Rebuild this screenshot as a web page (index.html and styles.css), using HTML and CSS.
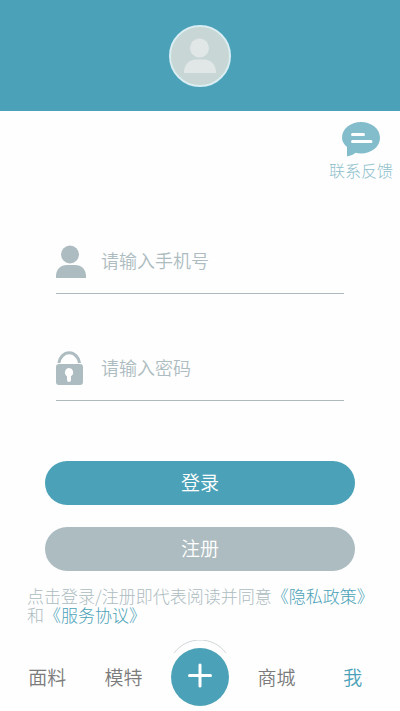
FILE: index.html
```html
<!DOCTYPE html>
<html lang="zh-CN">
<head>
<meta charset="utf-8">
<meta name="viewport" content="width=device-width, initial-scale=1">
<title>登录</title>
<link rel="stylesheet" href="styles.css">
</head>
<body>
<header class="header">
  <svg class="avatar" viewBox="0 0 62 62" role="img" aria-label="头像">
    <circle class="avatar-disc" cx="31" cy="31" r="30"/>
    <circle class="avatar-person" cx="30.500" cy="23" r="9.500"/>
    <path class="avatar-person" d="M15 48v-1c0-7 5-12.500 12-12.500h8c7 0 12 5.500 12 12.500v1z"/>
  </svg>
</header>
<main class="main">
  <a class="feedback" href="#feedback">
    <svg class="feedback-icon" viewBox="0 0 38 36" aria-hidden="true">
      <path class="bubble" d="M19 0C29.500 0 38 6.800 38 15.800S29.500 31.500 19 31.500c-2 0-3.800-.2-5.500-.7-2 1.800-4.500 3-8.500 3.700V25C2 22.500 0 19.500 0 15.800 0 6.800 8.500 0 19 0z"/>
      <path class="bubble-line" d="M10.500 12.500h11M10.500 19.500h18.500"/>
    </svg>
    <span>联系反馈</span>
  </a>
  <form class="form">
    <div class="fields">
      <div class="field">
        <label class="field-label" for="phone" aria-label="手机号">
          <svg class="field-icon" viewBox="0 0 30 34" aria-hidden="true">
            <circle cx="14" cy="10.500" r="9"/>
            <path d="M0 34v-2c0-6.500 4.500-11 11-11h8c6.500 0 11 4.500 11 11v2z"/>
          </svg>
        </label>
        <input class="field-input" id="phone" type="tel" placeholder="请输入手机号">
      </div>
      <div class="field">
        <label class="field-label" for="password" aria-label="密码">
          <svg class="field-icon" viewBox="0 0 30 34" aria-hidden="true">
            <path class="shackle" d="M2.800 12a10.600 12.800 0 0 1 20.800 0"/>
            <path fill-rule="evenodd" d="M3 13h21a3 3 0 0 1 3 3v15a3 3 0 0 1-3 3H3a3 3 0 0 1-3-3V16a3 3 0 0 1 3-3zM13.300 17a4.500 4.500 0 0 0-2.300 8.300V29a2 2 0 0 0 4 0v-3.700A4.500 4.500 0 0 0 13.300 17z"/>
          </svg>
        </label>
        <input class="field-input" id="password" type="password" placeholder="请输入密码">
      </div>
    </div>
    <div class="actions">
      <button class="btn btn-primary" type="submit">登录</button>
      <button class="btn btn-muted" type="button">注册</button>
    </div>
  </form>
  <p class="terms">点击登录/注册即代表阅读并同意<a href="#privacy">《隐私政策》</a>和<a href="#service">《服务协议》</a></p>
</main>
<nav class="tabs">
  <a class="tab" href="#fabric">面料</a>
  <a class="tab" href="#model">模特</a>
  <button class="add" type="button" aria-label="添加">
    <svg class="add-icon" viewBox="0 0 66 66" aria-hidden="true">
      <path class="add-arc" d="M7 13a32.500 32.500 0 0 1 52 0"/>
      <circle class="add-disc" cx="33" cy="37" r="29"/>
      <path class="add-plus" d="M33 25v21M22.500 35.500h21"/>
    </svg>
  </button>
  <a class="tab" href="#mall">商城</a>
  <a class="tab tab-active" href="#me">我</a>
</nav>
</body>
</html>
```
FILE: styles.css
```css
* {
  box-sizing: border-box;
}

body {
  margin: 0;
  min-height: 100vh;
  display: flex;
  flex-direction: column;
  background: #fefefe;
  color: #adbcc0;
  font-family: "Noto Sans CJK SC", sans-serif;
  font-weight: 300;
}

a {
  color: #4ba2b8;
  text-decoration: none;
}

button,
input {
  font: inherit;
  border: 0;
  padding: 0;
}

.header {
  display: flex;
  justify-content: center;
  padding: 25px 0 24px;
  background: #4ba2b8;
}

.avatar {
  width: 62px;
  height: 62px;
}

.avatar-disc {
  fill: #c8d6d5;
  stroke: #d9edf2;
  stroke-width: 2;
}

.avatar-person {
  fill: #e0e7e6;
}

.main {
  display: flex;
  flex-direction: column;
  flex: 1;
}

.feedback {
  align-self: flex-end;
  display: flex;
  flex-direction: column;
  align-items: center;
  margin: 11px 7px 0 0;
  font-size: 16px;
  line-height: 24px;
  color: #8dbfcb;
}

.feedback-icon {
  width: 38px;
  height: 36px;
}

.bubble {
  fill: #83bdcb;
}

.bubble-line {
  fill: none;
  stroke: #fefefe;
  stroke-width: 3;
  stroke-linecap: round;
}

.form {
  margin-top: 46px;
}

.fields {
  display: flex;
  flex-direction: column;
  gap: 41px;
  padding: 0 56px;
}

.field {
  display: flex;
  align-items: center;
  gap: 15px;
  height: 66px;
  border-bottom: 1px solid #adbabd;
}

.field-label {
  display: flex;
}

.field-icon {
  width: 30px;
  height: 34px;
  fill: #adbcc0;
}

.shackle {
  fill: none;
  stroke: #adbcc0;
  stroke-width: 3;
}

.field-input {
  flex: 1;
  min-width: 0;
  height: 40px;
  padding-bottom: 2px;
  background: transparent;
  font-size: 18px;
  font-weight: 350;
  color: #6f7d81;
  outline: none;
}

.field-input::placeholder {
  color: #adbcc0;
}

.actions {
  display: flex;
  flex-direction: column;
  gap: 22px;
  padding: 60px 45px 0;
}

.btn {
  height: 44px;
  padding-bottom: 4px;
  border-radius: 22px;
  font-size: 19px;
  font-weight: 350;
  color: #fff;
}

.btn-primary {
  background: #4ba2b8;
}

.btn-muted {
  background: #adbcc0;
}

.terms {
  margin: 15px 24px 0 27px;
  font-size: 17px;
  line-height: 19px;
}

.tabs {
  display: grid;
  grid-template-columns: repeat(5, 1fr);
  align-items: center;
  padding: 0 9px 5px;
  font-size: 19px;
}

.tab {
  padding-top: 6px;
  text-align: center;
  color: #7b7b7b;
  font-weight: 350;
}

.tab-active {
  color: #4ba2b8;
}

.add {
  display: flex;
  justify-content: center;
  background: none;
}

.add-icon {
  width: 66px;
  height: 66px;
}

.add-arc {
  fill: none;
  stroke: #d0d6d8;
}

.add-disc {
  fill: #4ba2b8;
}

.add-plus {
  fill: none;
  stroke: #fff;
  stroke-width: 3;
  stroke-linecap: round;
}
```
